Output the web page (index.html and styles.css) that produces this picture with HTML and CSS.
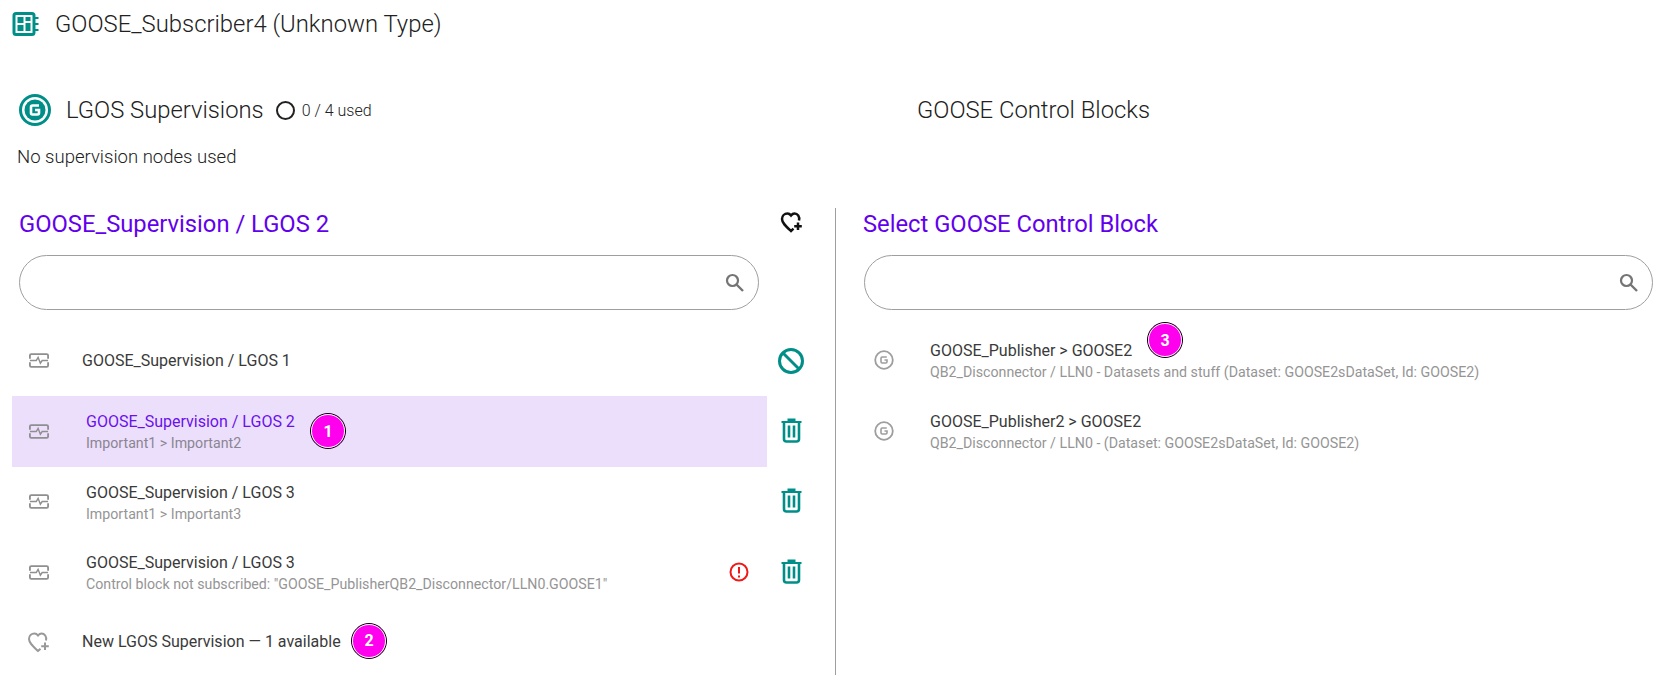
FILE: index.html
```html
<!DOCTYPE html>
<html lang="en">
<head>
    <meta charset="UTF-8">
    <meta name="viewport" content="width=device-width, initial-scale=1.0">
    <title>GOOSE Subscriber</title>
    <link rel="stylesheet" href="styles.css">
</head>
<body>
    <svg class="defs" width="0" height="0" aria-hidden="true">
        <symbol id="i-func" viewBox="0 0 22 18">
            <path d="M1 7V3.500Q1 2 2.500 2H19.500Q21 2 21 3.500V7M1 11V14.500Q1 16 2.500 16H19.500Q21 16 21 14.500V11" fill="none" stroke="currentColor" stroke-width="2"/>
            <path d="M1 9H8L10 5.500L12.500 12L14.500 9H21" fill="none" stroke="currentColor" stroke-width="1.600"/>
        </symbol>
        <symbol id="i-heart" viewBox="0 0 24 24">
            <path d="M19 10.500C20 6.500 17.500 3.500 14.500 3.500C13.200 3.500 12 4.200 11 5.500C10 4.200 8.800 3.500 7.500 3.500C4.500 3.500 2 5.800 2 9C2 13 6 16.500 11 21L13.500 18.700" fill="none" stroke="currentColor"/>
            <path d="M18 12.500V20M14.200 16.200H21.800" fill="none" stroke="currentColor"/>
        </symbol>
        <symbol id="i-trash" viewBox="0 0 22 26">
            <path d="M1 4H21V6H1ZM7 1.500H15V4H7Z" fill="currentColor"/>
            <path d="M3.500 5V22Q3.500 24.500 6 24.500H16Q18.500 24.500 18.500 22V5" fill="none" stroke="currentColor" stroke-width="2.600"/>
            <path d="M8.500 8.500V20.500M13.500 8.500V20.500" fill="none" stroke="currentColor" stroke-width="2.600"/>
        </symbol>
        <symbol id="i-search" viewBox="0 0 20 20">
            <circle cx="7.500" cy="7.500" r="5.500" fill="none" stroke="currentColor" stroke-width="2.200"/>
            <path d="M11.500 11.500L18 18" fill="none" stroke="currentColor" stroke-width="2.400"/>
        </symbol>
        <symbol id="i-goose" viewBox="0 0 20 20">
            <circle cx="10" cy="10" r="8.800" fill="none" stroke="currentColor" stroke-width="1.800"/>
            <path d="M12.800 7H8.200Q7 7 7 8.200V11.800Q7 13 8.200 13H11.800Q13 13 13 11.800V10H10.500" fill="none" stroke="currentColor" stroke-width="1.600"/>
        </symbol>
    </svg>

    <header class="page-title">
        <svg class="ied-icon" viewBox="0 0 26 24">
            <rect x="1.500" y="1.500" width="20" height="21" rx="2" fill="none" stroke="currentColor" stroke-width="3"/>
            <path d="M5 5H11V11H5ZM5 13H11V19H5ZM13 5H18V9H13ZM13 11H18V19H13Z" fill="currentColor"/>
            <path d="M22 6H26M22 12H26M22 18H26" fill="none" stroke="currentColor" stroke-width="2"/>
        </svg>
        <span>GOOSE_Subscriber4 (Unknown Type)</span>
    </header>

    <section class="summary">
        <div class="summary-left">
            <div class="summary-head">
                <svg class="lgos-icon" viewBox="0 0 32 32">
                    <circle cx="16" cy="16" r="14.500" fill="none" stroke="currentColor" stroke-width="3"/>
                    <circle cx="16" cy="16" r="10.500" fill="currentColor"/>
                    <path d="M20 11.500H13.500Q12 11.500 12 13V19Q12 20.500 13.500 20.500H18.500Q20 20.500 20 19V16H16" fill="none" stroke="#fff" stroke-width="2.600"/>
                </svg>
                <h2>LGOS Supervisions</h2>
                <span class="usage-ring"></span>
                <span class="usage">0 / 4 used</span>
            </div>
            <p class="none-used">No supervision nodes used</p>
        </div>
        <h2 class="summary-right">GOOSE Control Blocks</h2>
    </section>

    <main class="columns">
        <div class="col-left">
            <div class="col-title-row">
                <h3 class="col-title">GOOSE_Supervision / LGOS 2</h3>
                <svg class="add-icon"><use href="#i-heart"/></svg>
            </div>
            <div class="search-box">
                <svg class="search-icon"><use href="#i-search"/></svg>
            </div>
            <ul class="list">
                <li class="item item-single">
                    <svg class="item-icon"><use href="#i-func"/></svg>
                    <div class="item-text"><div class="primary">GOOSE_Supervision / LGOS 1</div></div>
                    <svg class="ban-icon" viewBox="0 0 28 28">
                        <circle cx="14" cy="14" r="11.500" fill="none" stroke="currentColor" stroke-width="3"/>
                        <path d="M6 6L22 22" stroke="currentColor" stroke-width="3"/>
                    </svg>
                </li>
                <li class="item item-selected">
                    <div class="item-body">
                        <svg class="item-icon"><use href="#i-func"/></svg>
                        <div class="item-text">
                            <div class="primary">GOOSE_Supervision / LGOS 2</div>
                            <div class="secondary">Important1 &gt; Important2</div>
                        </div>
                        <span class="badge badge-one">1</span>
                    </div>
                    <svg class="action-icon"><use href="#i-trash"/></svg>
                </li>
                <li class="item">
                    <div class="item-body">
                        <svg class="item-icon"><use href="#i-func"/></svg>
                        <div class="item-text">
                            <div class="primary">GOOSE_Supervision / LGOS 3</div>
                            <div class="secondary">Important1 &gt; Important3</div>
                        </div>
                    </div>
                    <svg class="action-icon"><use href="#i-trash"/></svg>
                </li>
                <li class="item">
                    <div class="item-body">
                        <svg class="item-icon"><use href="#i-func"/></svg>
                        <div class="item-text">
                            <div class="primary">GOOSE_Supervision / LGOS 3</div>
                            <div class="secondary">Control block not subscribed: "GOOSE_PublisherQB2_Disconnector/LLN0.GOOSE1"</div>
                        </div>
                        <svg class="error-icon" viewBox="0 0 20 20">
                            <circle cx="10" cy="10" r="8.500" fill="none" stroke="currentColor" stroke-width="2"/>
                            <path d="M10 5V11.500M10 13.500V15.500" stroke="currentColor" stroke-width="2"/>
                        </svg>
                    </div>
                    <svg class="action-icon"><use href="#i-trash"/></svg>
                </li>
                <li class="item item-single item-new">
                    <svg class="item-icon"><use href="#i-heart"/></svg>
                    <div class="item-text"><div class="primary">New LGOS Supervision — 1 available</div></div>
                    <span class="badge badge-two">2</span>
                </li>
            </ul>
        </div>

        <div class="col-right">
            <h3 class="col-title">Select GOOSE Control Block</h3>
            <div class="search-box">
                <svg class="search-icon"><use href="#i-search"/></svg>
            </div>
            <ul class="list list-blocks">
                <li class="block">
                    <svg class="block-icon"><use href="#i-goose"/></svg>
                    <div class="item-text">
                        <div class="primary">GOOSE_Publisher &gt; GOOSE2</div>
                        <div class="secondary">QB2_Disconnector / LLN0 - Datasets and stuff (Dataset: GOOSE2sDataSet, Id: GOOSE2)</div>
                    </div>
                    <span class="badge badge-three">3</span>
                </li>
                <li class="block">
                    <svg class="block-icon"><use href="#i-goose"/></svg>
                    <div class="item-text">
                        <div class="primary">GOOSE_Publisher2 &gt; GOOSE2</div>
                        <div class="secondary">QB2_Disconnector / LLN0 - (Dataset: GOOSE2sDataSet, Id: GOOSE2)</div>
                    </div>
                </li>
            </ul>
        </div>
    </main>
</body>
</html>
```

FILE: styles.css
```css
/* Page */
html, body {
    height: 100%;
    overflow: hidden;
}

body {
    margin: 0;
    font-family: Roboto, "Liberation Sans", sans-serif;
    background-color: #ffffff;
    color: #212121;
}

.defs {
    display: block;
    height: 0;
}

h2, h3, p, ul {
    margin: 0;
    padding: 0;
}

/* Title */
.page-title {
    display: flex;
    align-items: center;
    height: 48px;
    padding-left: 12px;
    font-size: 23.850px;
    font-weight: 300;
    color: #212121;
}

.ied-icon {
    width: 27px;
    height: 24px;
    margin-right: 16px;
    color: #008f88;
}

/* Summary row */
.summary {
    display: flex;
    padding-top: 38px;
    height: 122px;
    box-sizing: border-box;
}

.summary-left {
    width: 917px;
    padding-left: 17px;
    box-sizing: border-box;
}

.summary-head {
    display: flex;
    align-items: center;
    height: 48px;
    padding-left: 2px;
}

.lgos-icon {
    width: 32px;
    height: 32px;
    margin-right: 15px;
    color: #008f88;
}

.summary h2 {
    font-size: 23.800px;
    font-weight: 300;
    color: #212121;
}

.summary-right {
    line-height: 48px;
}

.usage-ring {
    width: 15px;
    height: 15px;
    margin-left: 12px;
    border: 2.500px solid #212121;
    border-radius: 50%;
}

.usage {
    margin-left: 7px;
    font-size: 16px;
    font-weight: 300;
}

.none-used {
    margin-top: 12px;
    font-size: 18.550px;
    font-weight: 300;
}

/* Two columns */
.columns {
    display: flex;
    height: 467px;
    margin-top: 38px;
}

.col-left {
    width: 836px;
    box-sizing: border-box;
    padding-left: 12px;
    border-right: 1px solid #9e9e9e;
}

.col-right {
    flex: 1;
    padding: 0 12px 0 28px;
}

.col-title-row {
    display: flex;
    justify-content: space-between;
    align-items: center;
    padding-right: 31px;
}

.col-title {
    height: 32px;
    padding-left: 7px;
    font-size: 23.750px;
    font-weight: 400;
    line-height: 32px;
    color: #6200ee;
}

.col-right .col-title {
    padding-left: 0;
    margin-left: -1px;
}

.add-icon {
    width: 24px;
    height: 24px;
    margin-bottom: 4px;
    color: #111111;
    stroke-width: 2.500;
}

.search-box {
    display: flex;
    align-items: center;
    justify-content: flex-end;
    height: 55px;
    margin-top: 15px;
    padding-right: 13px;
    box-sizing: border-box;
    border: 1px solid #9e9e9e;
    border-radius: 28px;
}

.col-left .search-box {
    width: 740px;
    margin-left: 7px;
}

.search-icon {
    width: 20px;
    height: 20px;
    color: #757575;
}

/* Lists */
.list {
    list-style: none;
}

.col-left .list {
    margin-top: 15px;
}

.item {
    display: flex;
    align-items: center;
    height: 70.500px;
}

.item-single {
    height: 71px;
    position: relative;
}

.item-body {
    display: flex;
    align-items: center;
    position: relative;
    width: 755px;
    height: 100%;
    margin-right: 13px;
}

.item-selected .item-body {
    background-color: #ecdffb;
}

.item-selected .primary {
    color: #6a10ee;
}

.item-icon {
    width: 20px;
    height: 17px;
    margin-left: 17px;
    color: #8f8f8f;
}

.item-text {
    margin-left: 37px;
}

.item-single .item-text {
    margin-left: 33px;
    flex: 1;
}

.primary {
    font-size: 16px;
    line-height: 24px;
    color: #3a3a3a;
}

.secondary {
    font-size: 14.200px;
    line-height: 18px;
    color: #959595;
}

.item-selected .secondary {
    color: #8a8592;
}

.action-icon {
    width: 23px;
    height: 26px;
    margin-bottom: 3px;
    color: #008f88;
}

.ban-icon {
    width: 28px;
    height: 28px;
    margin-right: 30px;
    color: #008f88;
}

.error-icon {
    width: 20px;
    height: 20px;
    position: absolute;
    right: 18px;
    color: #f01818;
}

.item-new {
    height: 69px;
}

.item-new .item-icon {
    width: 24px;
    height: 24px;
    margin-left: 15px;
    color: #999999;
    stroke-width: 2;
}

.item-new .item-text {
    margin-left: 31px;
}

/* Control blocks */
.list-blocks {
    margin-top: 15px;
}

.block {
    display: flex;
    align-items: center;
    height: 70.500px;
    position: relative;
}

.block-icon {
    width: 20px;
    height: 20px;
    margin-left: 10px;
    color: #9e9e9e;
}

.block .item-text {
    margin-left: 36px;
}

/* Numbered call-outs laid over the screenshot */
.badge {
    position: absolute;
    display: flex;
    align-items: center;
    justify-content: center;
    box-sizing: border-box;
    width: 36px;
    height: 36px;
    border: 1px solid #000000;
    outline: 1px solid #ffffff;
    outline-offset: -2px;
    border-radius: 50%;
    background-color: #ff00ee;
    color: #ffffff;
    font-size: 16px;
    font-weight: 700;
}

.badge-one {
    left: 298px;
    top: 17px;
}

.badge-two {
    left: 339px;
    top: 15px;
}

.badge-three {
    left: 283px;
    top: -3px;
}
```
